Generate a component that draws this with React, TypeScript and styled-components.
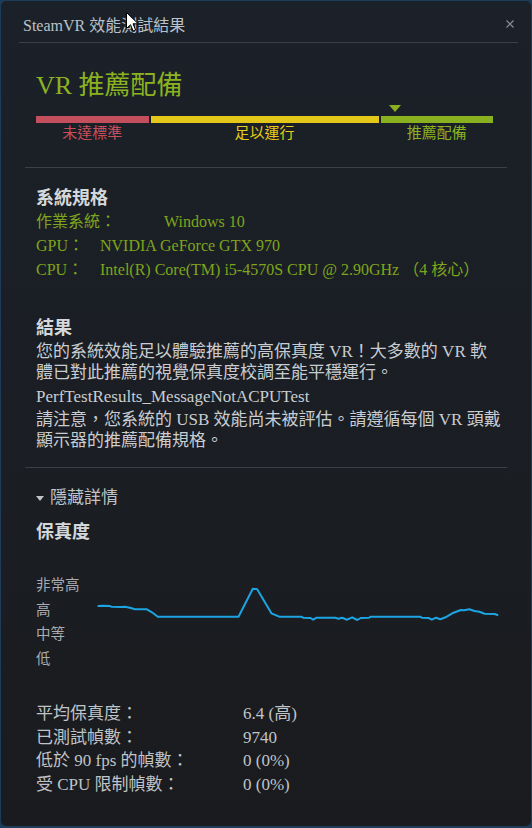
import styled, { createGlobalStyle } from 'styled-components';

const GlobalStyle = createGlobalStyle`
  html, body {
    margin: 0;
    padding: 0;
    background: #1c3d5a;
  }
  body {
    font-family: 'Liberation Serif', 'Noto Sans CJK TC', serif;
    -webkit-font-smoothing: antialiased;
  }
`;

const Window = styled.div`
  position: relative;
  height: 825px;
  margin: 1px 1px 2px;
  border-radius: 5px;
  background: linear-gradient(#1b2129, #1a1b1e);
  overflow: hidden;
`;

const Header = styled.div`
  box-sizing: border-box;
  height: 42px;
  margin: 0 13px 0 18px;
  padding: 4px 4px 0 4px;
  border-bottom: 1px solid #3b4046;
  display: flex;
  align-items: center;
  justify-content: space-between;
`;

const Title = styled.span`
  font-size: 16px;
  color: #b9c1c9;
`;

const CloseButton = styled.button`
  border: 0;
  padding: 0;
  background: none;
  width: 8px;
  height: 8px;
  display: flex;
  cursor: pointer;
`;

const Body = styled.div`
  padding: 0 24px;
`;

const Section = styled.section<{ $top: number; $bottom?: number; $divider?: boolean }>`
  padding: ${(p) => p.$top}px 6px ${(p) => p.$bottom ?? 0}px 11px;
  border-bottom: ${(p) => (p.$divider ? '1px solid #3b4046' : '0')};
`;

const Heading = styled.h1`
  margin: 0;
  font-size: 26px;
  line-height: 30px;
  font-weight: normal;
  color: #8bb21f;
`;

const Meter = styled.div`
  margin-right: 8px;
`;

const MarkerRow = styled.div`
  position: relative;
  height: 15px;
`;

const Marker = styled.div`
  position: absolute;
  bottom: 4px;
  width: 0;
  height: 0;
  margin-left: -6.5px;
  border-left: 6.5px solid transparent;
  border-right: 6.5px solid transparent;
  border-top: 7px solid #89b01e;
`;

const Tiers = styled.div`
  display: flex;
  gap: 2px;
`;

const Tier = styled.div<{ $grow: number }>`
  flex: ${(p) => p.$grow} 1 0;
  display: flex;
  flex-direction: column;
  align-items: center;
`;

const TierBar = styled.div<{ $color: string }>`
  align-self: stretch;
  height: 7px;
  background: ${(p) => p.$color};
`;

const TierLabel = styled.span<{ $color: string }>`
  margin-top: 2px;
  font-size: 15px;
  line-height: 16px;
  color: ${(p) => p.$color};
`;

const SectionTitle = styled.h2`
  margin: 0;
  font-size: 18px;
  line-height: 24px;
  font-weight: bold;
  color: #d5d8db;
`;

const SpecRow = styled.div`
  display: flex;
  font-size: 16px;
  line-height: 24px;
  color: #7fa51c;
  white-space: nowrap;
`;

const SpecLabel = styled.span<{ $width: number }>`
  width: ${(p) => p.$width}px;
  flex: none;
`;

const Paragraph = styled.p<{ $gap: number }>`
  margin: ${(p) => p.$gap}px 0 0;
  font-size: 17px;
  line-height: 21px;
  color: #c9cdd1;
  white-space: nowrap;
`;

const Toggle = styled.button`
  display: flex;
  align-items: center;
  gap: 6px;
  padding: 0;
  border: 0;
  background: none;
  font-family: inherit;
  font-size: 17px;
  line-height: 24px;
  color: #c0c4c8;
  cursor: pointer;
`;

const Caret = styled.span`
  width: 0;
  height: 0;
  border-left: 4.5px solid transparent;
  border-right: 4.5px solid transparent;
  border-top: 5px solid #c0c4c8;
`;

const FidelityTitle = styled(SectionTitle)`
  margin-top: 10px;
`;

const Chart = styled.div`
  display: flex;
  align-items: flex-start;
  margin-top: 29px;
`;

const Levels = styled.ul`
  margin: 0;
  padding: 0;
  list-style: none;
  width: 60px;
  flex: none;
  font-size: 14.5px;
  line-height: 24.5px;
  color: #a9adb1;
`;

const Stats = styled.dl`
  display: grid;
  grid-template-columns: 207px 1fr;
  margin: 31px 0 0;
  font-size: 17px;
  line-height: 23.5px;
  color: #c0c4c8;
  dt, dd {
    margin: 0;
  }
`;

const Cursor = styled.svg`
  position: absolute;
  left: 125px;
  top: 11px;
`;

const tiers = [
  { label: '未達標準', bar: '#c34f5c', text: '#c94e5c', grow: 113 },
  { label: '足以運行', bar: '#e3c819', text: '#e8cc16', grow: 229 },
  { label: '推薦配備', bar: '#89b01e', text: '#8bb21f', grow: 113 },
];

const specs = [
  { label: '作業系統：', value: 'Windows 10', width: 128 },
  { label: 'GPU：', value: 'NVIDIA GeForce GTX 970', width: 64 },
  { label: 'CPU：', value: 'Intel(R) Core(TM) i5-4570S CPU @ 2.90GHz （4 核心）', width: 64 },
];

const stats = [
  ['平均保真度：', '6.4 (高)'],
  ['已測試幀數：', '9740'],
  ['低於 90 fps 的幀數：', '0 (0%)'],
  ['受 CPU 限制幀數：', '0 (0%)'],
];

const fidelity =
  '97.4,606 101.8,605.7 108.6,606 110.3,606.7 120.5,607 123.9,606.7 128.9,607.7 134,609.3 145.9,609.3 151,612.3 156.8,616.7 ' +
  '237.5,616.7 251.8,588.7 256.2,589.3 270.4,613.3 278.2,616.7 300.3,616.7 302,617.7 309.5,618 312.2,619.7 315.6,617.7 ' +
  '334.2,617.7 337.6,618.7 341,617.7 346.1,619.7 351.2,617.3 356.3,620 359.7,618 368.2,617.7 369.9,616.7 419.1,616.7 ' +
  '420.8,617.7 427.5,618 430.9,619.7 435,617.7 439.4,619.3 444.5,617.3 451.3,613.3 459.8,610 463.2,610.3 468.3,609.3 ' +
  '473.4,611 478.4,611.7 483.5,613.7 493.7,614 496.4,615';

// where the score lands on the meter, 0..1
const markerPos = 361.5 / 459;

export default function App() {
  return (
    <>
      <GlobalStyle />
      <Window>
        <Header>
          <Title>SteamVR 效能測試結果</Title>
          <CloseButton aria-label="close">
            <svg width="8" height="8" viewBox="0 0 8 8">
              <path d="M0.5 0.5L7.5 7.5M7.5 0.5L0.5 7.5" stroke="#8a9096" strokeWidth="1.2" />
            </svg>
          </CloseButton>
        </Header>

        <Body>
          <Section $top={28} $bottom={26} $divider>
            <Heading>VR 推薦配備</Heading>
            <Meter>
              <MarkerRow>
                <Marker style={{ left: `${markerPos * 100}%` }} />
              </MarkerRow>
              <Tiers>
                {tiers.map((t) => (
                  <Tier key={t.label} $grow={t.grow}>
                    <TierBar $color={t.bar} />
                    <TierLabel $color={t.text}>{t.label}</TierLabel>
                  </Tier>
                ))}
              </Tiers>
            </Meter>
          </Section>

          <Section $top={18}>
            <SectionTitle>系統規格</SectionTitle>
            {specs.map((s) => (
              <SpecRow key={s.label}>
                <SpecLabel $width={s.width}>{s.label}</SpecLabel>
                <span>{s.value}</span>
              </SpecRow>
            ))}
          </Section>

          <Section $top={34} $bottom={16} $divider>
            <SectionTitle>結果</SectionTitle>
            <Paragraph $gap={1}>
              您的系統效能足以體驗推薦的高保真度 VR！大多數的 VR 軟
              <br />
              體已對此推薦的視覺保真度校調至能平穩運行。
            </Paragraph>
            <Paragraph $gap={3}>PerfTestResults_MessageNotACPUTest</Paragraph>
            <Paragraph $gap={2}>
              請注意，您系統的 USB 效能尚未被評估。請遵循每個 VR 頭戴
              <br />
              顯示器的推薦配備規格。
            </Paragraph>
          </Section>

          <Section $top={18}>
            <Toggle>
              <Caret />
              隱藏詳情
            </Toggle>
            <FidelityTitle>保真度</FidelityTitle>
            <Chart>
              <Levels>
                <li>非常高</li>
                <li>高</li>
                <li>中等</li>
                <li>低</li>
              </Levels>
              <svg width="405" height="98" viewBox="95 573 405 98">
                <polyline
                  points={fidelity}
                  fill="none"
                  stroke="#1da5e3"
                  strokeWidth="2"
                  strokeLinejoin="round"
                  strokeLinecap="round"
                />
              </svg>
            </Chart>
            <Stats>
              {stats.map(([k, v]) => (
                <div key={k} style={{ display: 'contents' }}>
                  <dt>{k}</dt>
                  <dd>{v}</dd>
                </div>
              ))}
            </Stats>
          </Section>
        </Body>

        <Cursor width="13" height="21" viewBox="0 0 13 21">
          <path d="M0.5 0.5V16.5L4.5 12.7L7.2 19L9.6 18L7 11.8H12.2Z" fill="#fff" stroke="#000" strokeWidth="1" />
        </Cursor>
      </Window>
    </>
  );
}
